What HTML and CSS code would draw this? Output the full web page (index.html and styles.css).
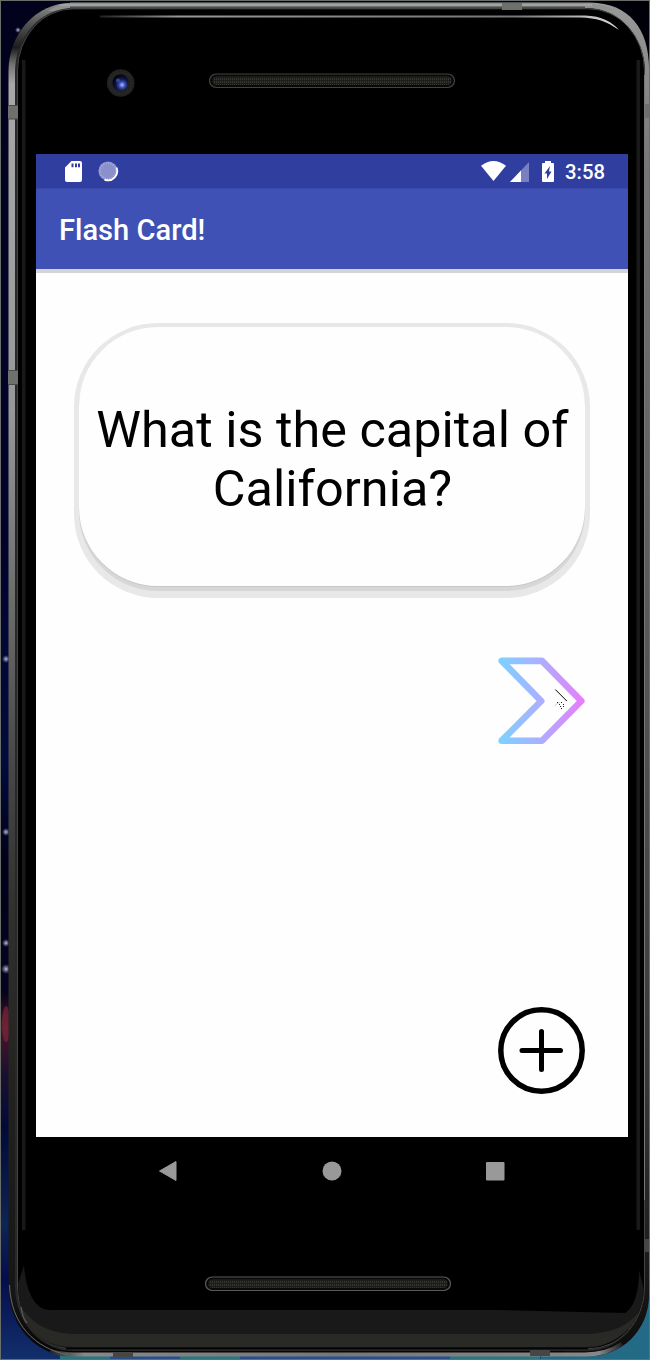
FILE: index.html
```html
<!DOCTYPE html>
<html lang="en">
<head>
<meta charset="utf-8">
<title>Flash Card!</title>
<link rel="stylesheet" href="styles.css">
</head>
<body>
<div class="stage">
  <svg class="frame" width="650" height="1360" viewBox="0 0 650 1360" aria-hidden="true">
    <defs>
      <linearGradient id="space" x1="0" y1="0" x2="0" y2="1">
        <stop offset="0" stop-color="#02021c"/><stop offset=".4" stop-color="#02032c"/><stop offset=".56" stop-color="#020b3c"/>
        <stop offset=".63" stop-color="#01011a"/><stop offset=".73" stop-color="#04041e"/><stop offset=".755" stop-color="#4c1428"/>
        <stop offset=".79" stop-color="#1a1030"/><stop offset=".83" stop-color="#020a38"/><stop offset=".9" stop-color="#0d2455"/><stop offset=".94" stop-color="#050d4c"/><stop offset="1" stop-color="#12306c"/>
      </linearGradient>
      <linearGradient id="metal" x1="0" y1="0" x2="0" y2="1">
        <stop offset="0" stop-color="#8d918c"/><stop offset=".015" stop-color="#555"/><stop offset=".033" stop-color="#1c1c1c"/>
        <stop offset=".045" stop-color="#707270"/><stop offset=".06" stop-color="#a8a8a8"/><stop offset=".3" stop-color="#989898"/><stop offset=".42" stop-color="#727472"/>
        <stop offset=".56" stop-color="#484848"/><stop offset=".67" stop-color="#30302f"/><stop offset=".8" stop-color="#22221f"/><stop offset=".95" stop-color="#161616"/><stop offset="1" stop-color="#050505"/>
      </linearGradient>
      <linearGradient id="metalRight" x1="0" y1="0" x2="0" y2="1">
        <stop offset="0" stop-color="#999"/><stop offset=".12" stop-color="#777"/><stop offset=".5" stop-color="#555"/><stop offset=".8" stop-color="#383838"/><stop offset="1" stop-color="#0c0c0c"/>
      </linearGradient>
      <linearGradient id="shine" x1="0" y1="0" x2="1" y2="0">
        <stop offset="0" stop-color="#222"/><stop offset=".15" stop-color="#999"/><stop offset=".8" stop-color="#777"/><stop offset="1" stop-color="#ddd"/>
      </linearGradient>
      <linearGradient id="bottomEdge" x1="0" y1="0" x2="1" y2="0">
        <stop offset="0" stop-color="#222"/><stop offset=".06" stop-color="#888"/><stop offset=".5" stop-color="#777"/><stop offset=".96" stop-color="#888"/><stop offset="1" stop-color="#222"/>
      </linearGradient>
      <radialGradient id="lens" cx=".6" cy=".65" r=".6">
        <stop offset="0" stop-color="#b0c0ff"/><stop offset=".3" stop-color="#3d52b8"/><stop offset=".6" stop-color="#101a55"/><stop offset="1" stop-color="#04040c"/>
      </radialGradient>
      <radialGradient id="star">
        <stop offset="0" stop-color="#c4c6dc"/><stop offset="1" stop-color="#8084b0" stop-opacity="0"/>
      </radialGradient>
      <pattern id="mesh" width="2" height="3" patternUnits="userSpaceOnUse">
        <rect width="2" height="3" fill="#1c1c1a"/><rect width="1" height="2" fill="#363633"/>
      </pattern>
    </defs>
    <rect width="650" height="1360" fill="url(#space)"/>
    <path d="M560 0H650V120H600Z" fill="#000008"/>
    <path d="M560 1300H650V1360H540Z" fill="#236a86"/>
    <path d="M60 1353H540V1360H60Z" fill="#2a7580"/>
    <path d="M110 1355H180V1360H110ZM240 1355H450V1360H240Z" fill="#274f8e"/>
    <g fill="url(#star)"><circle cx="6" cy="659" r="4"/><circle cx="6" cy="832" r="4"/><circle cx="6" cy="943" r="4"/><circle cx="6" cy="969" r="5"/><circle cx="18" cy="30" r="3"/></g>
    <ellipse cx="6" cy="1024" rx="4" ry="18" fill="#862c40" opacity=".6"/>

    <rect x="8.500" y="3" width="640.500" height="1353" rx="62" ry="68" fill="url(#metal)"/>
    <path d="M70 2.500H590C630 3 649 30 649 68V1295C649 1332 620 1356 590 1356H560L640 1290V70L580 10H70Z" fill="url(#metalRight)"/>
    <path d="M70 3H580Q600 3 615 10L600 11H48Q58 4 70 3Z" fill="#8f938f"/>
    <path d="M60 5H592" stroke="#b0b3ae" stroke-width="1"/>
    <rect x="15" y="8" width="630" height="1343" rx="58" ry="64" fill="#282828"/>
    <rect x="17.500" y="8.800" width="627" height="1340" rx="56" ry="62" fill="#000" stroke="#444" stroke-width="1"/>
    <path d="M70 7.500H585" stroke="#4b4d4a" stroke-width="2"/>
    <path d="M100 15.500H585C602 16 612 22 619 30C606 21 597 18 580 17.500H100Z" fill="url(#shine)"/>
    <path d="M22 60H25.500V1230H22ZM636.500 60H640V1230H636.500Z" fill="#191919"/>
    <path d="M18 1284L24 1265C26 1292 35 1310 50 1310H500L625 1313C635 1307 639 1290 639 1270L644 1290C642 1325 615 1348 585 1348H70C36 1346 18 1320 18 1284Z" fill="#191919"/>
    <path d="M20 1306C32 1322 45 1333 75 1334H590C615 1332 628 1325 639 1312C630 1334 610 1347 585 1347H75C45 1347 27 1332 20 1306Z" fill="#292926"/>
    <path d="M66 1348.500H588" stroke="#050505" stroke-width="2"/>
    <path d="M50 1351C60 1354 65 1354.500 75 1354.500H585C600 1354.500 613 1350 622 1344" fill="none" stroke="url(#bottomEdge)" stroke-width="4"/>
    <path d="M9.500 1285C11 1325 35 1348 68 1355" fill="none" stroke="#6b6b6b" stroke-width="1"/>
    <path d="M21 1307C22 1314 24 1320 27 1323" fill="none" stroke="#555" stroke-width="1.500"/>
    <path d="M8 105h10v14H8ZM8 371h10v14H8ZM502 3h20v7h-20ZM644 104h6v14h-6Z" fill="#6e706c"/>
    <path d="M113 1352h20v5h-20ZM530 1350h20v6h-20ZM645 1239h5v13h-5Z" fill="#464744"/>
    <path d="M8 105.500h10M8 119h10M8 370.500h10M8 384.500h10" stroke="#4a4a4a"/>
    <path d="M644.500 1200V75" stroke="#777" stroke-width="1"/>

    <circle cx="120.700" cy="83" r="13.800" fill="#222"/>
    <circle cx="120.700" cy="83" r="11" fill="none" stroke="#2e2e2e" stroke-width="2" stroke-dasharray="1 2"/>
    <circle cx="120.500" cy="82.500" r="8" fill="url(#lens)"/>
    <circle cx="118" cy="80.500" r="2" fill="#3448a0"/>
    <rect x="209.500" y="74" width="245" height="13.500" rx="6.750" fill="#090909" stroke="#434341" stroke-width="1.200"/>
    <rect x="212.500" y="76.500" width="239" height="8.500" rx="4" fill="url(#mesh)"/>
    <rect x="205.500" y="1277" width="245" height="13.500" rx="6.750" fill="#090909" stroke="#5a5a58" stroke-width="1.200"/>
    <rect x="208.500" y="1279.500" width="239" height="8.500" rx="4" fill="url(#mesh)"/>
    <path d="M.5 0V1360M0 .5H650M0 1359.500H650M649.500 0V1360" stroke="#6b6d69" stroke-width="1"/>
  </svg>

  <main class="screen">
    <header class="status">
      <div class="status-group notices">
        <svg width="17" height="21" viewBox="0 0 17 21"><path fill="#fff" fill-rule="evenodd" d="M6.500 0H15a2 2 0 0 1 2 2V19a2 2 0 0 1-2 2H2a2 2 0 0 1-2-2V6.500ZM6.500 2.500V6.300H8.500V2.500ZM10 2.500V6.300H12V2.500ZM13 2.500V6.300H15V2.500Z"/></svg>
        <svg width="21" height="21" viewBox="0 0 21 21"><circle cx="10" cy="10" r="9.600" fill="#8a91ca"/><circle cx="10" cy="10" r="8" fill="none" stroke="#aab0dc" stroke-width="2" stroke-dasharray="1 1.500"/><path d="M18.500 6.500a9.300 9.300 0 0 1-12 12.200" fill="none" stroke="#fff" stroke-width="1.800"/></svg>
      </div>
      <div class="status-group indicators">
        <svg class="wifi" width="25" height="20" viewBox="0 0 25 20"><path fill="#fff" d="M0 4.800Q12.500-4.800 25 4.800L12.500 20Z"/></svg>
        <svg class="signal" width="19" height="20" viewBox="0 0 19 20"><path fill="#7880c2" d="M19 0V20H0Z"/><path fill="#fff" d="M11 8.500V20H0Z"/></svg>
        <svg class="battery" width="12" height="21" viewBox="0 0 12 21"><path fill="#fff" fill-rule="evenodd" d="M3 0H9V2H11Q12 2 12 3V20Q12 21 11 21H1Q0 21 0 20V3Q0 2 1 2H3ZM8 5L2.500 12.500H5V18L9.500 10.500H7Z"/></svg>
        <span class="clock">3:58</span>
      </div>
    </header>
    <div class="appbar"><h1 class="title">Flash Card!</h1></div>
    <section class="content">
      <div class="card-edge"><div class="card">What is the capital of California?</div></div>
      <button class="next" aria-label="Next">
        <svg width="88" height="88" viewBox="0 0 88 88">
          <defs><linearGradient id="arrow" x1="0" y1="0" x2="1" y2="0"><stop offset="0" stop-color="#7fd0ff"/><stop offset=".5" stop-color="#adaeff"/><stop offset="1" stop-color="#e67ffb"/></linearGradient></defs>
          <path d="M3.700 3.900H44L83.300 44L44 83.700H3.700L43.200 44Z" fill="none" stroke="url(#arrow)" stroke-width="6.600" stroke-linejoin="round"/>
          <path d="M57.300 32.500L68.800 44" stroke="#000" stroke-width="1"/>
          <path d="M57 49L59 46.500 62 45.500" fill="none" stroke="#ccc"/>
          <path d="M59 45h1v1h-1zM63 45h1v1h-1zM61 47h1v1h-1zM65 47h1v1h-1zM62 49h1v1h-1zM65 49h1v1h-1zM63 51h1v1h-1z" fill="#222"/>
        </svg>
      </button>
      <button class="add" aria-label="Add card">
        <svg width="88" height="88" viewBox="0 0 88 88"><g fill="none" stroke="#000" stroke-width="5.500" stroke-linecap="round"><circle cx="43.500" cy="43.500" r="40.700"/><path d="M24 43.500H62.500M43.500 24.500V62.500" stroke-width="5"/></g></svg>
      </button>
    </section>
    <nav class="nav">
      <svg width="18" height="20" viewBox="0 0 18 20"><path d="M17 .500V19.500L.5 10Z" fill="#999" stroke="#999" stroke-linejoin="round"/></svg>
      <svg width="20" height="20" viewBox="0 0 20 20"><circle cx="10" cy="10" r="9.500" fill="#999"/></svg>
      <svg width="19" height="19" viewBox="0 0 19 19"><rect width="18.500" height="18.500" rx="1" fill="#999"/></svg>
    </nav>
  </main>
</div>
</body>
</html>
```

FILE: styles.css
```css
* { box-sizing: border-box; }
body { margin: 0; background: #000; font-family: Roboto, "Liberation Sans", sans-serif; }
svg { display: block; flex: none; }
.stage { position: relative; width: 650px; height: 1360px; padding: 154px 22px 0 36px; overflow: hidden; }
.frame { position: absolute; top: 0; left: 0; }
.screen { position: relative; display: flex; flex-direction: column; width: 592px; }
.status { display: flex; justify-content: space-between; height: 34px; padding: 7px 23px 0 29px; background: #303f9f; }
.status-group { display: flex; align-items: flex-start; }
.notices { gap: 16px; }
.indicators { color: #fff; }
.signal { margin: 1px 13px 0 4px; }
.clock { margin-left: 11px; font-size: 20.3px; font-weight: 500; line-height: 23px; }
.appbar { display: flex; align-items: center; height: 81px; padding: 3px 23px 0; background: #3f51b5; box-shadow: inset 0 1px #3949ab; }
.title { margin: 0; color: #fff; font-size: 29.1px; font-weight: 500; line-height: 34px; }
.content { display: flex; flex-direction: column; height: 868px; padding: 50px 38px 0; background: #fefefe; border-top: 4px solid #e2e2e2; border-image: linear-gradient(#d4d4d4 50%, #ebebeb 50%) 4; }
.card-edge { height: 275px; padding: 4px 5px 12px; border-radius: 84px; background: #e8e8e8; }
.card { display: flex; align-items: center; justify-content: center; height: 259px; padding: 4px 9px 0 10px; border-radius: 79px; background: #fefefe; box-shadow: 0 1px #c8c8c8, 0 5px #d7d7d7; color: #000; font-size: 50.4px; line-height: 59px; text-align: center; }
.next, .add { width: 88px; height: 88px; padding: 0; border: 0; background: none; align-self: flex-end; margin-right: 4px; }
.next { margin-top: 59px; }
.add { margin-top: 262px; }
.nav { display: flex; align-items: center; justify-content: space-between; height: 68px; padding: 0 123px; }
```
